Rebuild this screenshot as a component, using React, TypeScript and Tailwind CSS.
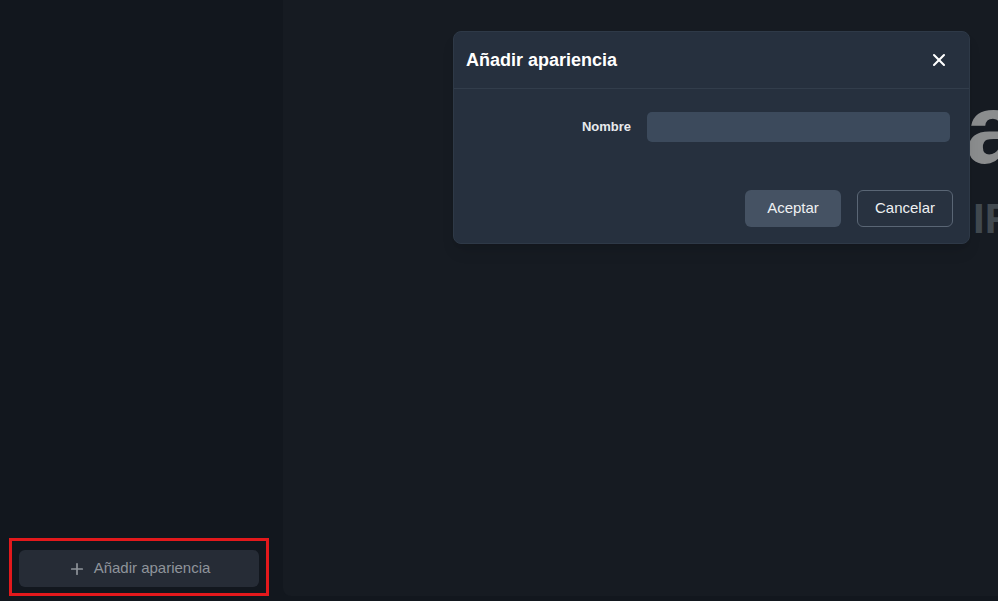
import { Plus, X } from 'lucide-react'

function Sidebar() {
  return (
    <aside className="flex w-[283px] shrink-0 flex-col justify-end bg-[#12171e] pb-[5px] pl-[9px]">
      {/* highlighted add button */}
      <div className="w-[260px] border-[3px] border-[#e3191c] px-[7px] pt-[9px] pb-[6px]">
        <button className="flex h-[37px] w-full items-center justify-center gap-[8px] rounded-md bg-[#262c36] text-[15px] text-[#8f949b]">
          <Plus size={18} strokeWidth={2.25} className="text-[#8f949b]" />
          <span>Añadir apariencia</span>
        </button>
      </div>
    </aside>
  )
}

function Backdrop() {
  return (
    <div className="flex min-w-0 flex-1 flex-col overflow-hidden pb-[5px]">
      <div className="flex flex-1 flex-col overflow-hidden rounded-bl-lg bg-[#161b22] pl-[683px]">
        <div className="mt-[80px] whitespace-nowrap text-[98px] font-bold leading-none text-[#8b8d8e]">apariencia</div>
        <div className="mt-[20px] whitespace-nowrap pl-[7px] text-[42px] font-bold leading-none text-[#41494f]">IFICAR</div>
      </div>
    </div>
  )
}

function AddDialog() {
  return (
    <div className="absolute left-[453px] top-[31px] w-[517px] rounded-lg border border-[#2e3947] bg-[#26303e] shadow-lg">
      <div className="flex h-[57px] items-center justify-between border-b border-[#323d4b] pl-[12px] pr-[20px]">
        <h2 className="text-[18px] font-bold text-white">Añadir apariencia</h2>
        <X size={20} strokeWidth={2.5} className="text-white" />
      </div>
      <div className="flex items-center gap-[16px] pt-[23px] pr-[19px]">
        <label className="w-[177px] text-right text-[13px] font-bold text-[#e8eaed]">Nombre</label>
        <input className="h-[30px] flex-1 rounded-[5px] bg-[#3c4a5c] px-2 text-sm text-white outline-none" />
      </div>
      <div className="flex justify-end gap-[16px] pt-[48px] pr-[16px] pb-[16px]">
        <button className="h-[37px] w-[96px] rounded-md bg-[#455263] text-[15px] text-[#eef0f2]">Aceptar</button>
        <button className="h-[37px] w-[96px] rounded-md border border-[#5a6675] bg-[#283240] text-[15px] text-[#eef0f2]">Cancelar</button>
      </div>
    </div>
  )
}

export default function App() {
  return (
    <div
      className="relative flex h-[601px] w-[998px] overflow-hidden bg-[#12171e]"
      style={{ fontFamily: '"Liberation Sans", Arial, sans-serif' }}
    >
      <Sidebar />
      <Backdrop />
      <AddDialog />
    </div>
  )
}
